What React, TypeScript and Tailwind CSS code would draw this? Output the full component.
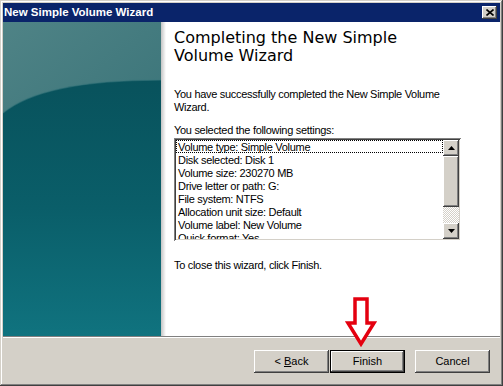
import React from 'react';

const settings = [
  'Volume type: Simple Volume',
  'Disk selected: Disk 1',
  'Volume size: 230270 MB',
  'Drive letter or path: G:',
  'File system: NTFS',
  'Allocation unit size: Default',
  'Volume label: New Volume',
  'Quick format: Yes',
];

const raised =
  'shadow-[inset_-1px_-1px_#404040,inset_1px_1px_#ffffff,inset_-2px_-2px_#808080,inset_2px_2px_#d4d0c8]';

const Arrow: React.FC<{ down?: boolean }> = ({ down }) => (
  <svg width="7" height="4" viewBox="0 0 7 4">
    {down ? <path d="M0 0H7L3.5 4Z" fill="#000" /> : <path d="M0 4H7L3.5 0Z" fill="#000" />}
  </svg>
);

const WizardButton: React.FC<{ children: React.ReactNode; primary?: boolean }> = ({ children, primary }) =>
  primary ? (
    <div className="border border-black w-[75px] h-[23px]">
      <div className={`w-full h-full flex items-center justify-center bg-[#d4d0c8] ${raised}`}>{children}</div>
    </div>
  ) : (
    <div className={`w-[75px] h-[23px] flex items-center justify-center bg-[#d4d0c8] ${raised}`}>{children}</div>
  );

const SidePanel: React.FC = () => (
  <svg width="158" height="314" viewBox="0 0 158 314" className="block">
    <defs>
      <linearGradient id="up" x1="0" y1="0" x2="0.4" y2="1">
        <stop offset="0" stopColor="#4f8386" />
        <stop offset="1" stopColor="#2f6c72" />
      </linearGradient>
      <linearGradient id="low" x1="0" y1="0" x2="0" y2="1">
        <stop offset="0" stopColor="#08525c" />
        <stop offset="0.5" stopColor="#0a5e69" />
        <stop offset="1" stopColor="#10737f" />
      </linearGradient>
    </defs>
    <rect width="158" height="314" fill="url(#up)" />
    <path d="M0 91Q40 58 158 58V314H0Z" fill="url(#low)" />
    <path d="M0 91Q40 58 158 58" fill="none" stroke="#3a787e" strokeOpacity="0.5" strokeWidth="1.5" />
  </svg>
);

export default function App() {
  return (
    <div
      className="relative w-[503px] h-[386px] bg-[#d4d0c8] p-[3px] flex flex-col shadow-[inset_-1px_-1px_#404040,inset_1px_1px_#d4d0c8,inset_-2px_-2px_#808080,inset_2px_2px_#ffffff]"
      style={{ fontFamily: '"Liberation Sans", Arial, sans-serif' }}
    >
      {/* title bar */}
      <div className="h-[19px] bg-[#0a246a] flex items-center justify-between pl-[1px] pr-[3px]">
        <span className="text-white font-bold text-[11.5px] leading-none">New Simple Volume Wizard</span>
        <div className={`w-[15px] h-[13px] bg-[#d4d0c8] flex items-center justify-center ${raised}`}>
          <svg width="8" height="7" viewBox="0 0 8 7">
            <path d="M0.5 0.5L7.5 6.5M7.5 0.5L0.5 6.5" stroke="#000" strokeWidth="1.6" />
          </svg>
        </div>
      </div>

      {/* content */}
      <div className="flex h-[314px]">
        <SidePanel />
        <div className="relative flex-1 bg-white pl-[13px] pt-[7px] text-[11px] tracking-[-0.3px] text-black">
          <div className="absolute left-0 top-0 bottom-0 w-[5px] bg-gradient-to-r from-[#c4c4c4] to-white" />
          <h1
            className="relative text-[16px] leading-[18px] tracking-normal text-black"
            style={{ fontFamily: '"DejaVu Sans", Verdana, sans-serif' }}
          >
            Completing the New Simple
            <br />
            Volume Wizard
          </h1>
          <p className="mt-[23px] leading-[13px] w-[275px]">
            You have successfully completed the New Simple Volume Wizard.
          </p>
          <p className="mt-[10px] leading-[13px]">You selected the following settings:</p>

          {/* list box */}
          <div className="mt-[1px] w-[287px] h-[103px] p-[2px] flex shadow-[inset_1px_1px_#808080,inset_-1px_-1px_#ffffff,inset_2px_2px_#404040,inset_-2px_-2px_#d4d0c8]">
            <div className="flex-1 overflow-hidden bg-white">
              {settings.map((s, i) => (
                <div
                  key={s}
                  className={`h-[13px] leading-[12px] pl-[1px] whitespace-nowrap ${
                    i === 0 ? 'border border-dotted border-black' : 'border border-transparent'
                  }`}
                >
                  {s}
                </div>
              ))}
            </div>
            <div className="w-[16px] flex flex-col">
              <div className={`h-[16px] flex items-center justify-center bg-[#d4d0c8] ${raised}`}>
                <Arrow />
              </div>
              <div className={`h-[51px] bg-[#d4d0c8] ${raised}`} />
              <div className="flex-1 bg-[repeating-conic-gradient(#d4d0c8_0%_25%,#ffffff_0%_50%)] bg-[length:2px_2px]" />
              <div className={`h-[16px] flex items-center justify-center bg-[#d4d0c8] ${raised}`}>
                <Arrow down />
              </div>
            </div>
          </div>

          <p className="mt-[18px] leading-[13px]">To close this wizard, click Finish.</p>
        </div>
      </div>

      {/* separator */}
      <div className="h-[1px] bg-[#808080]" />
      <div className="h-[1px] bg-white" />

      {/* buttons */}
      <div className="flex-1 flex items-start justify-end pt-[12px] pr-[10px] text-[11px] text-black">
        <WizardButton>
          &lt; <span className="underline ml-[3px]">B</span>ack
        </WizardButton>
        <div className="ml-[1px]">
          <WizardButton primary>Finish</WizardButton>
        </div>
        <div className="ml-[10px]">
          <WizardButton>Cancel</WizardButton>
        </div>
      </div>

      {/* red pointer arrow */}
      <svg
        className="absolute left-[344px] top-[296px]"
        width="34"
        height="52"
        viewBox="0 0 34 52"
      >
        <path
          d="M11 3H23V27H30L17 48L4 27H11Z"
          fill="#ffffff"
          stroke="#e4000f"
          strokeWidth="3.5"
          strokeLinejoin="miter"
        />
      </svg>
    </div>
  );
}
